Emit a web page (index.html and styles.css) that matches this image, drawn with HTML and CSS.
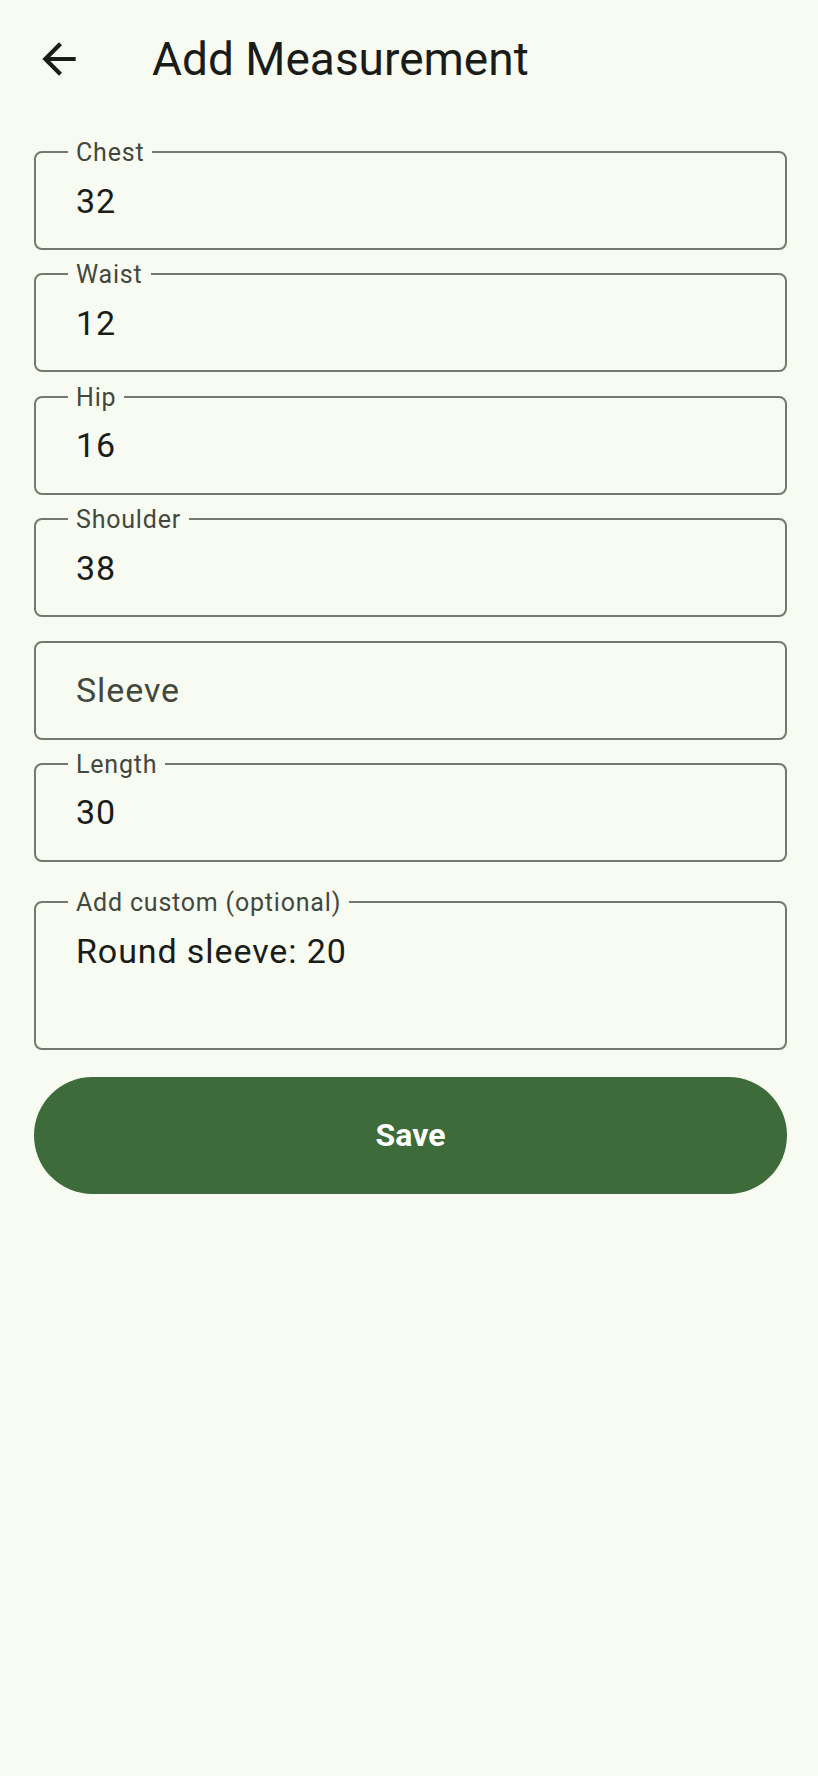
FILE: index.html
```html
<!DOCTYPE html>
<html lang="en">
<head>
    <meta charset="UTF-8">
    <meta name="viewport" content="width=device-width, initial-scale=1.0">
    <title>Add Measurement</title>
    <link rel="stylesheet" href="styles.css">
</head>
<body>
    <header class="appBar">
        <button class="backButton" aria-label="Back">
            <svg viewBox="0 0 24 24" width="50" height="50">
                <path d="M20 11H7.83l5.59-5.59L12 4l-8 8 8 8 1.41-1.41L7.83 13H20v-2z" fill="#1a1c19"/>
            </svg>
        </button>
        <h1 class="titleText">Add Measurement</h1>
    </header>

    <main class="form">
        <div class="fieldList">
            <div class="field">
                <span class="fieldLabel">Chest</span>
                <span class="fieldValue">32</span>
            </div>
            <div class="field">
                <span class="fieldLabel">Waist</span>
                <span class="fieldValue">12</span>
            </div>
            <div class="field">
                <span class="fieldLabel">Hip</span>
                <span class="fieldValue">16</span>
            </div>
            <div class="field">
                <span class="fieldLabel">Shoulder</span>
                <span class="fieldValue">38</span>
            </div>
            <div class="field">
                <span class="fieldHint">Sleeve</span>
            </div>
            <div class="field">
                <span class="fieldLabel">Length</span>
                <span class="fieldValue">30</span>
            </div>
        </div>

        <div class="field customField">
            <span class="fieldLabel">Add custom (optional)</span>
            <span class="fieldValue">Round sleeve: 20</span>
        </div>

        <button class="saveButton">Save</button>
    </main>
</body>
</html>
```

FILE: styles.css
```css
body {
    margin: 0;
    background-color: #f8fbf1;
    font-family: Roboto, "Noto Sans", sans-serif;
    color: #1a1c19;
}
button {
    border: none;
    cursor: pointer;
    appearance: none;
    background-color: inherit;
    font-family: inherit;
}
.appBar {
    display: flex;
    align-items: center;
    height: 118px;
    padding-left: 34px;
}
.backButton {
    padding: 0;
    width: 50px;
    height: 50px;
    display: flex;
}
.titleText {
    margin: 0 0 0 68px;
    font-size: 46px;
    font-weight: 400;
    line-height: 1;
}
.form {
    padding: 33px 31px 0 34px;
}
.fieldList {
    display: flex;
    flex-direction: column;
    gap: 23.4px;
}
.field {
    position: relative;
    box-sizing: border-box;
    height: 99px;
    border: 2px solid #73796e;
    border-radius: 8px;
    display: flex;
    align-items: center;
    padding-left: 40px;
}
.fieldLabel {
    position: absolute;
    top: -1px;
    left: 32px;
    transform: translateY(-50%);
    padding: 0 8px;
    background-color: #f8fbf1;
    color: #43483e;
    font-size: 25px;
    letter-spacing: 0.8px;
    line-height: 1;
}
.fieldValue,
.fieldHint {
    font-size: 34px;
    letter-spacing: 0.9px;
    line-height: 1;
}
.fieldHint {
    color: #43483e;
}
.customField {
    margin-top: 39px;
    height: 149px;
    align-items: flex-start;
    padding-top: 31px;
}
.saveButton {
    display: block;
    width: 100%;
    height: 117px;
    margin-top: 27px;
    border-radius: 59px;
    background-color: #3d6b39;
    color: #ffffff;
    font-size: 32px;
    font-weight: 700;
}
```
